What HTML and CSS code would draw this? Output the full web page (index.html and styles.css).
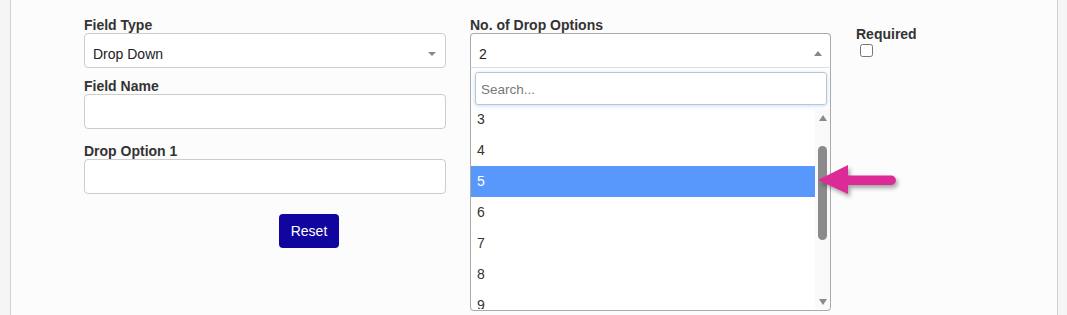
FILE: index.html
```html
<!DOCTYPE html>
<html lang="en">
<head>
    <meta charset="UTF-8">
    <meta name="viewport" content="width=device-width, initial-scale=1.0">
    <title>Field Editor</title>
    <link rel="stylesheet" href="styles.css">
</head>
<body>
    <div class="panel">
        <div class="col col-left">
            <div class="field">
                <label class="field-label">Field Type</label>
                <div class="select">
                    <span class="select-value">Drop Down</span>
                    <span class="caret caret-down"></span>
                </div>
            </div>
            <div class="field field-name">
                <label class="field-label">Field Name</label>
                <input class="text-input" type="text">
            </div>
            <div class="field field-option">
                <label class="field-label">Drop Option 1</label>
                <input class="text-input" type="text">
            </div>
            <div class="actions">
                <button class="btn-reset">Reset</button>
            </div>
        </div>

        <div class="col col-mid">
            <label class="field-label">No. of Drop Options</label>
            <div class="select open">
                <span class="select-value">2</span>
                <span class="caret caret-up"></span>
            </div>
            <div class="dropdown">
                <div class="search-wrap">
                    <input class="search" type="text" placeholder="Search...">
                </div>
                <div class="results">
                    <ul class="options">
                        <li>3</li>
                        <li>4</li>
                        <li class="highlighted">5</li>
                        <li>6</li>
                        <li>7</li>
                        <li>8</li>
                        <li>9</li>
                    </ul>
                    <div class="scrollbar">
                        <span class="sb-arrow sb-up"></span>
                        <span class="sb-thumb"></span>
                        <span class="sb-arrow sb-down"></span>
                    </div>
                </div>
            </div>
        </div>

        <div class="col col-req">
            <label class="field-label">Required</label>
            <input class="check" type="checkbox">
        </div>

        <svg class="pointer" width="95" height="45" viewBox="0 0 95 45">
            <path d="M8 22 L38 7 L38 17.5 L81.2 17.5 A4.75 4.75 0 0 1 81.2 27 L38 27 L38 36 Z" fill="#dc2a97"/>
        </svg>
    </div>
</body>
</html>
```

FILE: styles.css
```css
html, body {
    margin: 0;
    height: 100%;
}
body {
    background-color: #f5f5f5;
    font-family: "Liberation Sans", Arial, sans-serif;
    color: #333;
}
.panel {
    position: relative;
    box-sizing: border-box;
    height: 100%;
    margin: 0 9px 0 10px;
    border-left: 1px solid #cfcfcf;
    border-right: 1px solid #cfcfcf;
    background-color: #fcfcfc;
    padding: 17px 0 0 73px;
    display: flex;
    align-items: flex-start;
}
.col-left {
    width: 362px;
    margin-right: 24px;
}
.col-mid {
    width: 361px;
    margin-right: 25px;
}
.col-req {
    padding-top: 9px;
}
.field-label {
    display: block;
    font-size: 14px;
    font-weight: bold;
    line-height: 16px;
    color: #333;
}
.field-name {
    margin-top: 10px;
}
.field-option {
    margin-top: 14px;
}
.select {
    box-sizing: border-box;
    height: 35px;
    border: 1px solid #ccc;
    border-radius: 4px;
    background-color: #fff;
    padding: 6px 8px 0;
    display: flex;
    align-items: center;
    justify-content: space-between;
    font-size: 14px;
    color: #222;
}
.select.open {
    border-radius: 4px 4px 0 0;
    border-color: #aaa;
    border-bottom-color: #ddd;
}
.caret {
    width: 0;
    height: 0;
    border-left: 4px solid transparent;
    border-right: 4px solid transparent;
}
.caret-down {
    border-top: 4px solid #888;
    margin-right: 1px;
}
.caret-up {
    border-bottom: 5px solid #888;
}
.text-input {
    display: block;
    box-sizing: border-box;
    width: 100%;
    height: 35px;
    margin: 0;
    border: 1px solid #ccc;
    border-radius: 4px;
    background-color: #fff;
}
.actions {
    margin-top: 20px;
    padding-left: 195px;
}
.btn-reset {
    width: 60px;
    height: 34px;
    border: none;
    border-radius: 4px;
    background-color: #10069f;
    color: #fff;
    font-family: "Liberation Sans", Arial, sans-serif;
    font-size: 14px;
    padding: 0;
}
.dropdown {
    box-sizing: border-box;
    height: 243px;
    border: 1px solid #aaa;
    border-top: none;
    border-radius: 0 0 4px 4px;
    background-color: #fff;
    overflow: hidden;
}
.search-wrap {
    padding: 4px 3px 4px 4px;
}
.search {
    display: block;
    box-sizing: border-box;
    width: 100%;
    height: 33px;
    margin: 0;
    padding: 1px 5px 0;
    border: 1px solid #b9c6d3;
    border-radius: 3px;
    box-shadow: 0 1px 4px rgba(102, 160, 220, 0.35);
    font-family: "Liberation Sans", Arial, sans-serif;
    font-size: 13.5px;
    color: #333;
}
.search::placeholder {
    color: #777;
}
.results {
    height: 200px;
    display: flex;
    overflow: hidden;
}
.options {
    flex: 1;
    list-style: none;
    margin: -5px 0 0;
    padding: 0;
}
.options li {
    height: 31px;
    line-height: 31px;
    padding-left: 6px;
    font-size: 14px;
    color: #333;
}
.options li.highlighted {
    background-color: #5897fb;
    color: #fff;
}
.scrollbar {
    width: 15px;
    background-color: #f9f9f9;
    display: flex;
    flex-direction: column;
    align-items: center;
    padding: 6px 0 4px;
    box-sizing: border-box;
}
.sb-arrow {
    width: 0;
    height: 0;
    border-left: 4.5px solid transparent;
    border-right: 4.5px solid transparent;
}
.sb-up {
    border-bottom: 6px solid #8a8a8a;
}
.sb-down {
    border-top: 6px solid #8a8a8a;
    margin-top: auto;
}
.sb-thumb {
    width: 9px;
    height: 94px;
    margin-top: 25px;
    border-radius: 5px;
    background-color: #8a8a8a;
}
.check {
    display: block;
    width: 13px;
    height: 13px;
    margin: 2px 0 0 4px;
}
.pointer {
    position: absolute;
    left: 799px;
    top: 158px;
    filter: drop-shadow(2px 3px 2px rgba(0, 0, 0, 0.35));
}
```
